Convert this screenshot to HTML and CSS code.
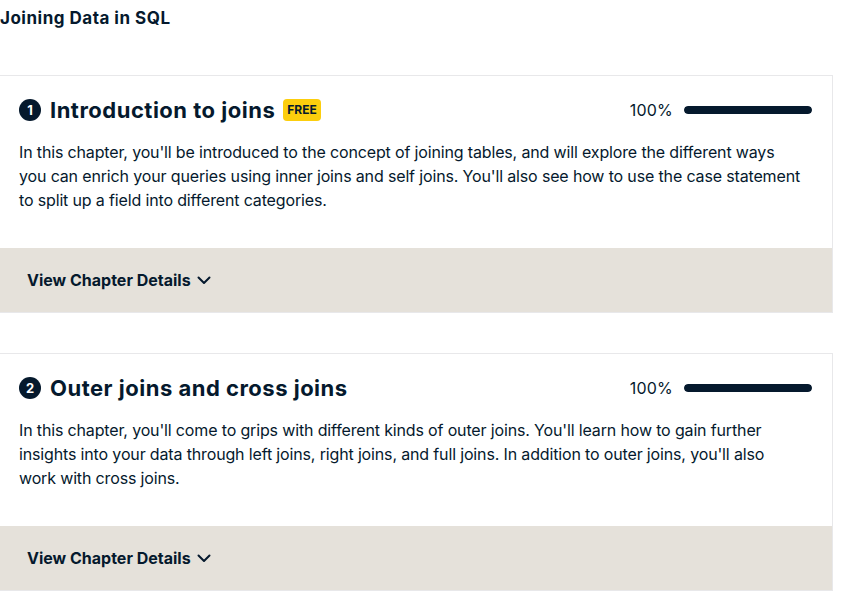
FILE: index.html
```html
<!DOCTYPE html>
<html lang="en">
<head>
<meta charset="utf-8">
<title>Joining Data in SQL</title>
<link rel="stylesheet" href="styles.css">
</head>
<body>
<h1 class="course-title">Joining Data in SQL</h1>
<div class="chapters">
  <div class="card">
    <div class="card-body">
      <div class="card-head">
        <span class="num">1</span>
        <h2 class="chapter-title">Introduction to joins</h2>
        <span class="badge">FREE</span>
        <div class="progress">
          <span class="pct">100%</span>
          <span class="bar"><span class="fill" style="width:100%"></span></span>
        </div>
      </div>
      <p class="desc">In this chapter, you'll be introduced to the concept of joining tables, and will explore the different ways you can enrich your queries using inner joins and self joins. You'll also see how to use the case statement to split up a field into different categories.</p>
    </div>
    <div class="card-foot">
      <span class="details">View Chapter Details</span>
      <svg class="chev" width="14" height="14" viewBox="0 0 14 14"><path d="M1.5 4.5 L7 10 L12.5 4.5" fill="none" stroke="#05192d" stroke-width="2" stroke-linecap="round" stroke-linejoin="round"/></svg>
    </div>
  </div>
  <div class="card">
    <div class="card-body">
      <div class="card-head">
        <span class="num">2</span>
        <h2 class="chapter-title">Outer joins and cross joins</h2>
        <div class="progress">
          <span class="pct">100%</span>
          <span class="bar"><span class="fill" style="width:100%"></span></span>
        </div>
      </div>
      <p class="desc">In this chapter, you'll come to grips with different kinds of outer joins. You'll learn how to gain further insights into your data through left joins, right joins, and full joins. In addition to outer joins, you'll also work with cross joins.</p>
    </div>
    <div class="card-foot">
      <span class="details">View Chapter Details</span>
      <svg class="chev" width="14" height="14" viewBox="0 0 14 14"><path d="M1.5 4.5 L7 10 L12.5 4.5" fill="none" stroke="#05192d" stroke-width="2" stroke-linecap="round" stroke-linejoin="round"/></svg>
    </div>
  </div>
</div>
</body>
</html>
```

FILE: styles.css
```css
html, body {
  margin: 0;
  padding: 0;
  background: #ffffff;
}
body {
  font-family: "Inter", "Noto Sans", sans-serif;
  color: #05192d;
}
.course-title {
  margin: 6px 0 0 0;
  font-size: 17px;
  letter-spacing: 0.5px;
  line-height: 24px;
  font-weight: 700;
}
.chapters {
  margin-top: 45px;
  margin-left: -1px;
  width: 834px;
  display: flex;
  flex-direction: column;
  gap: 40px;
}
.card {
  border: 1px solid #e8e8ea;
  background: #fff;
}
.card-body {
  padding: 18px 20px 36px 19px;
}
.card-head {
  display: flex;
  align-items: center;
  height: 32px;
}
.num {
  width: 22px;
  height: 22px;
  border-radius: 50%;
  background: #05192d;
  color: #fff;
  font-size: 13px;
  font-weight: 700;
  display: flex;
  align-items: center;
  justify-content: center;
  flex-shrink: 0;
}
.chapter-title {
  margin: 0 0 0 9px;
  font-size: 22px;
  letter-spacing: 0.5px;
  line-height: 32px;
  font-weight: 700;
}
.badge {
  margin-left: 8px;
  background: #fcce0d;
  border-radius: 4px;
  font-size: 12px;
  font-weight: 700;
  line-height: 22px;
  padding: 0 4px;
}
.progress {
  margin-left: auto;
  display: flex;
  align-items: center;
  gap: 11px;
}
.pct {
  font-size: 16px;
  letter-spacing: 0.2px;
}
.bar {
  width: 128px;
  height: 8px;
  border-radius: 4px;
  background: #e8e8ea;
  display: block;
  overflow: hidden;
}
.fill {
  display: block;
  height: 100%;
  background: #05192d;
  border-radius: 4px;
}
.desc {
  margin: 14px 0 0 0;
  max-width: 785px;
  font-size: 16px;
  letter-spacing: -0.15px;
  line-height: 24px;
}
.card-foot {
  background: #e5e1da;
  height: 64px;
  display: flex;
  align-items: center;
  padding-left: 27px;
  gap: 6px;
}
.details {
  font-size: 16px;
  font-weight: 700;
}
.chev {
  display: block;
}
```
